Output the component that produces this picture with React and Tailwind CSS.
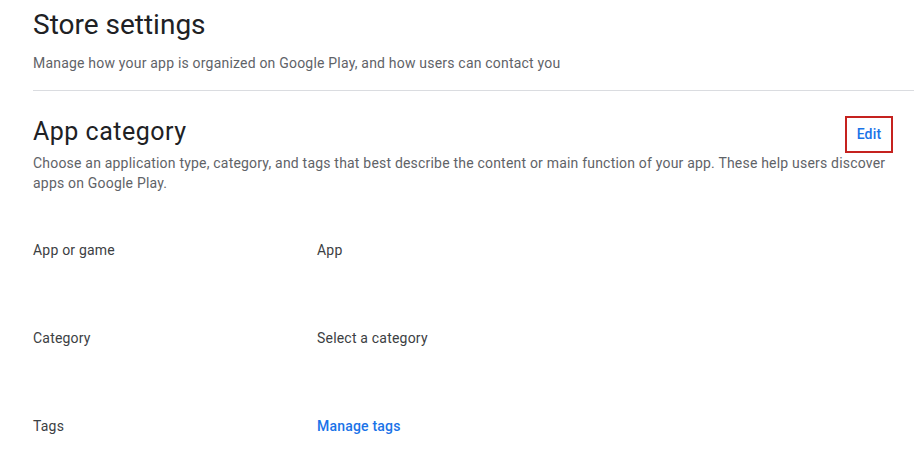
export default function App() {
  const rows = [
    { label: "App or game", value: "App" },
    { label: "Category", value: "Select a category" },
    { label: "Tags", value: "Manage tags", link: true },
  ];
  return (
    <div
      className="w-[914px] h-[468px] overflow-hidden bg-white pl-[33px] text-[#3c4043] tracking-[0.2px]"
      style={{ fontFamily: "Roboto, 'Liberation Sans', sans-serif" }}
    >
      <header className="pr-[21px]">
        <h1 className="pt-[5px] text-[28px] leading-[40px] tracking-normal text-[#202124]">Store settings</h1>
        <p className="mt-[8px] text-[14px] leading-[20px] text-[#5f6368]">
          Manage how your app is organized on Google Play, and how users can contact you
        </p>
      </header>
      <div className="mt-[17px] h-px bg-[#dadce0]" />
      <section className="pr-[21px]">
        <div className="mt-[25px] flex items-start justify-between">
          <h2 className="text-[25px] leading-[32px] tracking-[0.5px] text-[#202124]">App category</h2>
          <button className="mt-0 h-[37px] w-[48px] border-2 border-[#c5221f] text-[14px] font-medium text-[#1a73e8]">
            Edit
          </button>
        </div>
        <p className="mt-[0px] pr-[4px] text-[14px] leading-[20px] text-[#5f6368]">
          Choose an application type, category, and tags that best describe the content or main function of your app. These help users discover apps on Google Play.
        </p>
        <div className="mt-[47px] flex flex-col gap-[68px]">
          {rows.map((r) => (
            <div key={r.label} className="flex text-[14px] leading-[20px]">
              <div className="w-[284px]">{r.label}</div>
              <div className={r.link ? "font-medium text-[#1a73e8]" : ""}>{r.value}</div>
            </div>
          ))}
        </div>
      </section>
    </div>
  );
}
